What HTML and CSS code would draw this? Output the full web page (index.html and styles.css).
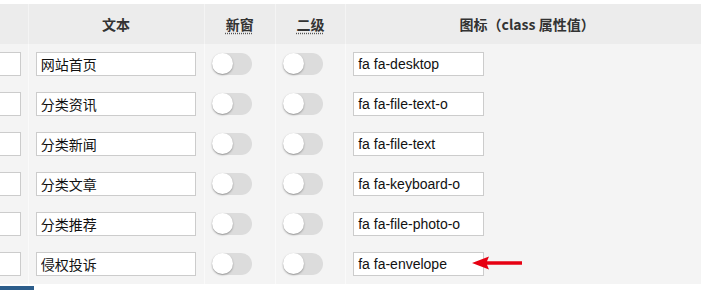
FILE: index.html
```html
<!DOCTYPE html>
<html lang="zh">
<head>
<meta charset="utf-8">
<link rel="stylesheet" href="styles.css">
</head>
<body>
<div class="page">
  <table class="menu">
    <thead>
      <tr>
        <th class="c0"></th>
        <th class="c1">文本</th>
        <th class="c2"><abbr>新窗</abbr></th>
        <th class="c3"><abbr>二级</abbr></th>
        <th class="c4">图标（class 属性值）</th>
      </tr>
    </thead>
    <tbody>
      <tr>
        <td class="c0"><input class="in in0" value=""></td>
        <td class="c1"><input class="in in1" value="网站首页"></td>
        <td class="c2"><span class="sw"></span></td>
        <td class="c3"><span class="sw"></span></td>
        <td class="c4"><input class="in in4" value="fa fa-desktop"></td>
      </tr>
      <tr>
        <td class="c0"><input class="in in0" value=""></td>
        <td class="c1"><input class="in in1" value="分类资讯"></td>
        <td class="c2"><span class="sw"></span></td>
        <td class="c3"><span class="sw"></span></td>
        <td class="c4"><input class="in in4" value="fa fa-file-text-o"></td>
      </tr>
      <tr>
        <td class="c0"><input class="in in0" value=""></td>
        <td class="c1"><input class="in in1" value="分类新闻"></td>
        <td class="c2"><span class="sw"></span></td>
        <td class="c3"><span class="sw"></span></td>
        <td class="c4"><input class="in in4" value="fa fa-file-text"></td>
      </tr>
      <tr>
        <td class="c0"><input class="in in0" value=""></td>
        <td class="c1"><input class="in in1" value="分类文章"></td>
        <td class="c2"><span class="sw"></span></td>
        <td class="c3"><span class="sw"></span></td>
        <td class="c4"><input class="in in4" value="fa fa-keyboard-o"></td>
      </tr>
      <tr>
        <td class="c0"><input class="in in0" value=""></td>
        <td class="c1"><input class="in in1" value="分类推荐"></td>
        <td class="c2"><span class="sw"></span></td>
        <td class="c3"><span class="sw"></span></td>
        <td class="c4"><input class="in in4" value="fa fa-file-photo-o"></td>
      </tr>
      <tr>
        <td class="c0"><input class="in in0" value=""></td>
        <td class="c1"><input class="in in1" value="侵权投诉"></td>
        <td class="c2"><span class="sw"></span></td>
        <td class="c3"><span class="sw"></span></td>
        <td class="c4 arrowcell"><input class="in in4" value="fa fa-envelope">
          <svg class="arrow" width="54" height="14" viewBox="0 0 54 14"><path d="M1 7 L18 0.5 L16 5.3 L51 5.3 L51 8.7 L16 8.7 L18 13.5 Z" fill="#e60012"/></svg>
        </td>
      </tr>
    </tbody>
  </table>
  <div class="bar"></div>
</div>
</body>
</html>
```

FILE: styles.css
```css
html, body {
  margin: 0;
  padding: 0;
  background: #ffffff;
  overflow: hidden;
}
.page {
  padding-top: 4px;
  width: 701px;
  overflow: hidden;
  font-family: "Liberation Sans", "Noto Sans CJK SC", sans-serif;
  color: #333;
}
.menu {
  border-collapse: collapse;
  margin-left: -102px;
  table-layout: fixed;
  width: 810px;
}
.menu th {
  height: 40px;
  padding: 0;
  background: #ececec;
  font-size: 14px;
  font-weight: bold;
  color: #333;
  text-align: center;
  font-family: "Noto Sans CJK SC", "Liberation Sans", sans-serif;
  border-left: 1px solid #f4f4f4;
}
.menu th abbr {
  text-decoration: underline dotted #555;
  text-underline-offset: 3px;
}
.menu td {
  height: 24px;
  padding: 8px 0 8px 7px;
  background: #f4f4f4;
  border-left: 1px solid #fafafa;
  vertical-align: middle;
}
.menu th:first-child, .menu td:first-child { border-left: none; }
.c0 { width: 129px; }
.c1 { width: 174px; }
.c2 { width: 70px; }
.c3 { width: 69px; }
.c4 { width: 360px; }
.in {
  display: block;
  box-sizing: border-box;
  height: 24px;
  border: 1px solid #cccccc;
  background: #fff;
  padding: 0 4px;
  margin: 0;
  font-size: 14px;
  color: #111;
  font-family: "Liberation Sans", "Noto Sans CJK SC", sans-serif;
  outline: none;
}
.in1 { font-family: "Noto Sans CJK SC", "Liberation Sans", sans-serif; }
.in0 { width: 116px; }
.in1 { width: 160px; }
.in4 { width: 131px; }
.sw {
  display: block;
  position: relative;
  width: 40px;
  height: 22px;
  border-radius: 11px;
  background: #dcdcdc;
}
.sw::after {
  content: "";
  position: absolute;
  left: 0;
  top: 0;
  width: 21px;
  height: 21px;
  border-radius: 50%;
  background: #fff;
  box-shadow: 0 1px 2px rgba(0,0,0,0.35);
}
.arrowcell { position: relative; }
.arrow {
  position: absolute;
  left: 125px;
  top: 12px;
}
.bar {
  width: 34px;
  height: 4px;
  margin-top: 2px;
  background: #2c5d8b;
}
```
